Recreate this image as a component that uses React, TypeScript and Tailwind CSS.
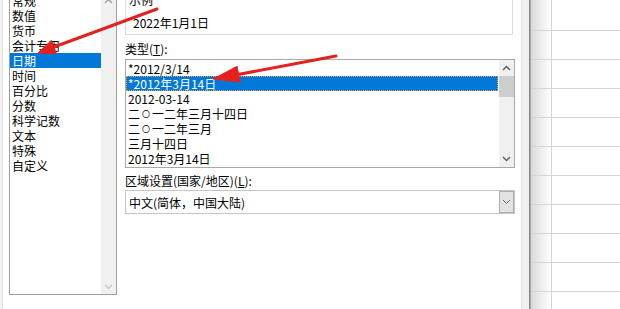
const categories = ["常规", "数值", "货币", "会计专用", "日期", "时间", "百分比", "分数", "科学记数", "文本", "特殊", "自定义"];
const types = ["*2012/3/14", "*2012年3月14日", "2012-03-14", "二〇一二年三月十四日", "二〇一二年三月", "三月十四日", "2012年3月14日"];

function Chevron({ up, color = "#606060", w = 1.5 }: { up?: boolean; color?: string; w?: number }) {
  return (
    <svg width="9" height="6" viewBox="0 0 9 6">
      <polyline points={up ? "1,5 4.5,1.5 8,5" : "1,1 4.5,4.5 8,1"} fill="none" stroke={color} strokeWidth={w} />
    </svg>
  );
}

// the dialog font draws 〇 as a small ring, so shrink it inside a full-width cell
function TypeText({ text }: { text: string }) {
  const parts = text.split("〇");
  return (
    <>
      {parts.map((p, i) => (
        <span key={i}>
          {i > 0 && <span className="inline-block w-[12px] text-center text-[8px] leading-[15px] align-top">〇</span>}
          {p}
        </span>
      ))}
    </>
  );
}

function Arrows() {
  return (
    <svg className="pointer-events-none absolute inset-0" width="620" height="309" viewBox="0 0 620 309">
      <g fill="#e4211f" stroke="#e4211f">
        <line x1="157" y1="9" x2="54" y2="47" strokeWidth="3" strokeLinecap="round" />
        <polygon points="38,53 51.4,40.4 56.4,53.6" strokeWidth="1" strokeLinejoin="round" />
        <line x1="336" y1="56" x2="238" y2="74.5" strokeWidth="3" strokeLinecap="round" />
        <polygon points="213,79 237.1,66.3 240.1,82.1" strokeWidth="1" strokeLinejoin="round" />
      </g>
    </svg>
  );
}

export default function App() {
  return (
    <div className="relative flex h-[309px] w-[620px] overflow-hidden bg-white text-[12px] leading-[15px] text-black font-['Noto_Sans_CJK_SC','Microsoft_YaHei',sans-serif]">
      <div className="w-[3px] border-r border-[#dedede] bg-[#f2f2f2]" />

      {/* dialog body */}
      <div className="flex w-[518px] items-start gap-[8px] pl-[6px]">
        {/* category list */}
        <div className="mt-[-9px] flex h-[304px] w-[108px] border border-[#a0a0a0] bg-white">
          <div className="flex-1 pt-[1px]">
            {categories.map((c) => (
              <div key={c} className={`h-[15px] pl-[2px] ${c === "日期" ? "bg-[#0078d7] text-white" : ""}`}>
                {c}
              </div>
            ))}
          </div>
          <div className="flex w-[15px] flex-col items-center justify-between bg-[#f0f0f0] pb-[4px] pt-[6px]">
            <Chevron up color="#a6a6a6" />
            <Chevron color="#c6c6c6" w={1.2} />
          </div>
        </div>

        {/* right column */}
        <div className="mt-[-20px] flex w-[390px] flex-col">
          <div className="h-[55px] w-[388px] border border-[#dcdcdc] pl-[3px] pt-[11px]">
            <div>示例</div>
            <div className="mt-[8px] pl-[4px]">2022年1月1日</div>
          </div>

          <div className="mt-[6px]">
            类型(<u>T</u>):
          </div>
          <div className="mt-[3px] flex h-[109px] border border-[#a8a8a8] bg-white">
            <div className="flex-1 py-[1px]">
              {types.map((t, i) => (
                <div
                  key={t}
                  className={`h-[15px] whitespace-nowrap pl-[2px] ${i === 1 ? "bg-[#0078d7] text-white outline-1 -outline-offset-1 outline-dotted outline-[#e8a050]" : ""}`}
                >
                  <TypeText text={t} />
                </div>
              ))}
            </div>
            <div className="ml-[1px] flex w-[15px] flex-col bg-[#f0f0f0]">
              <div className="flex h-[16px] items-center justify-center">
                <Chevron up />
              </div>
              <div className="h-[21px] bg-[#cdcdcd]" />
              <div className="flex flex-1 items-end justify-center pb-[5px]">
                <Chevron />
              </div>
            </div>
          </div>

          <div className="mt-[5px]">
            区域设置(国家/地区)(<u>L</u>):
          </div>
          <div className="mt-[2px] flex h-[24px] items-center border border-[#c6c6c6] bg-white">
            <div className="flex-1 pl-[3px]">中文(简体，中国大陆)</div>
            <div className="flex h-[22px] w-[15px] items-center justify-center border border-[#adadad] bg-[#e3e3e3]">
              <Chevron color="#707070" w={1} />
            </div>
          </div>
        </div>
      </div>

      {/* dialog frame edge */}
      <div className="w-[8px] border-l border-[#e2e2e2] bg-[#f0f0f0]" />
      <div className="w-[2px] bg-gradient-to-r from-[#7c7c7c] to-[#b4b4b4]" />

      {/* worksheet behind */}
      <div className="flex flex-1 flex-col">
        {Array.from({ length: 11 }).map((_, i) => (
          <div key={i} className={`flex shrink-0 border-b border-[#d6d6d6] ${i === 0 ? "h-[31px]" : "h-[29px]"}`}>
            <div className="w-[21px] border-r border-[#d6d6d6] bg-gradient-to-r from-[#dadada] to-white" />
            <div className="flex-1" />
          </div>
        ))}
      </div>

      <Arrows />
    </div>
  );
}
